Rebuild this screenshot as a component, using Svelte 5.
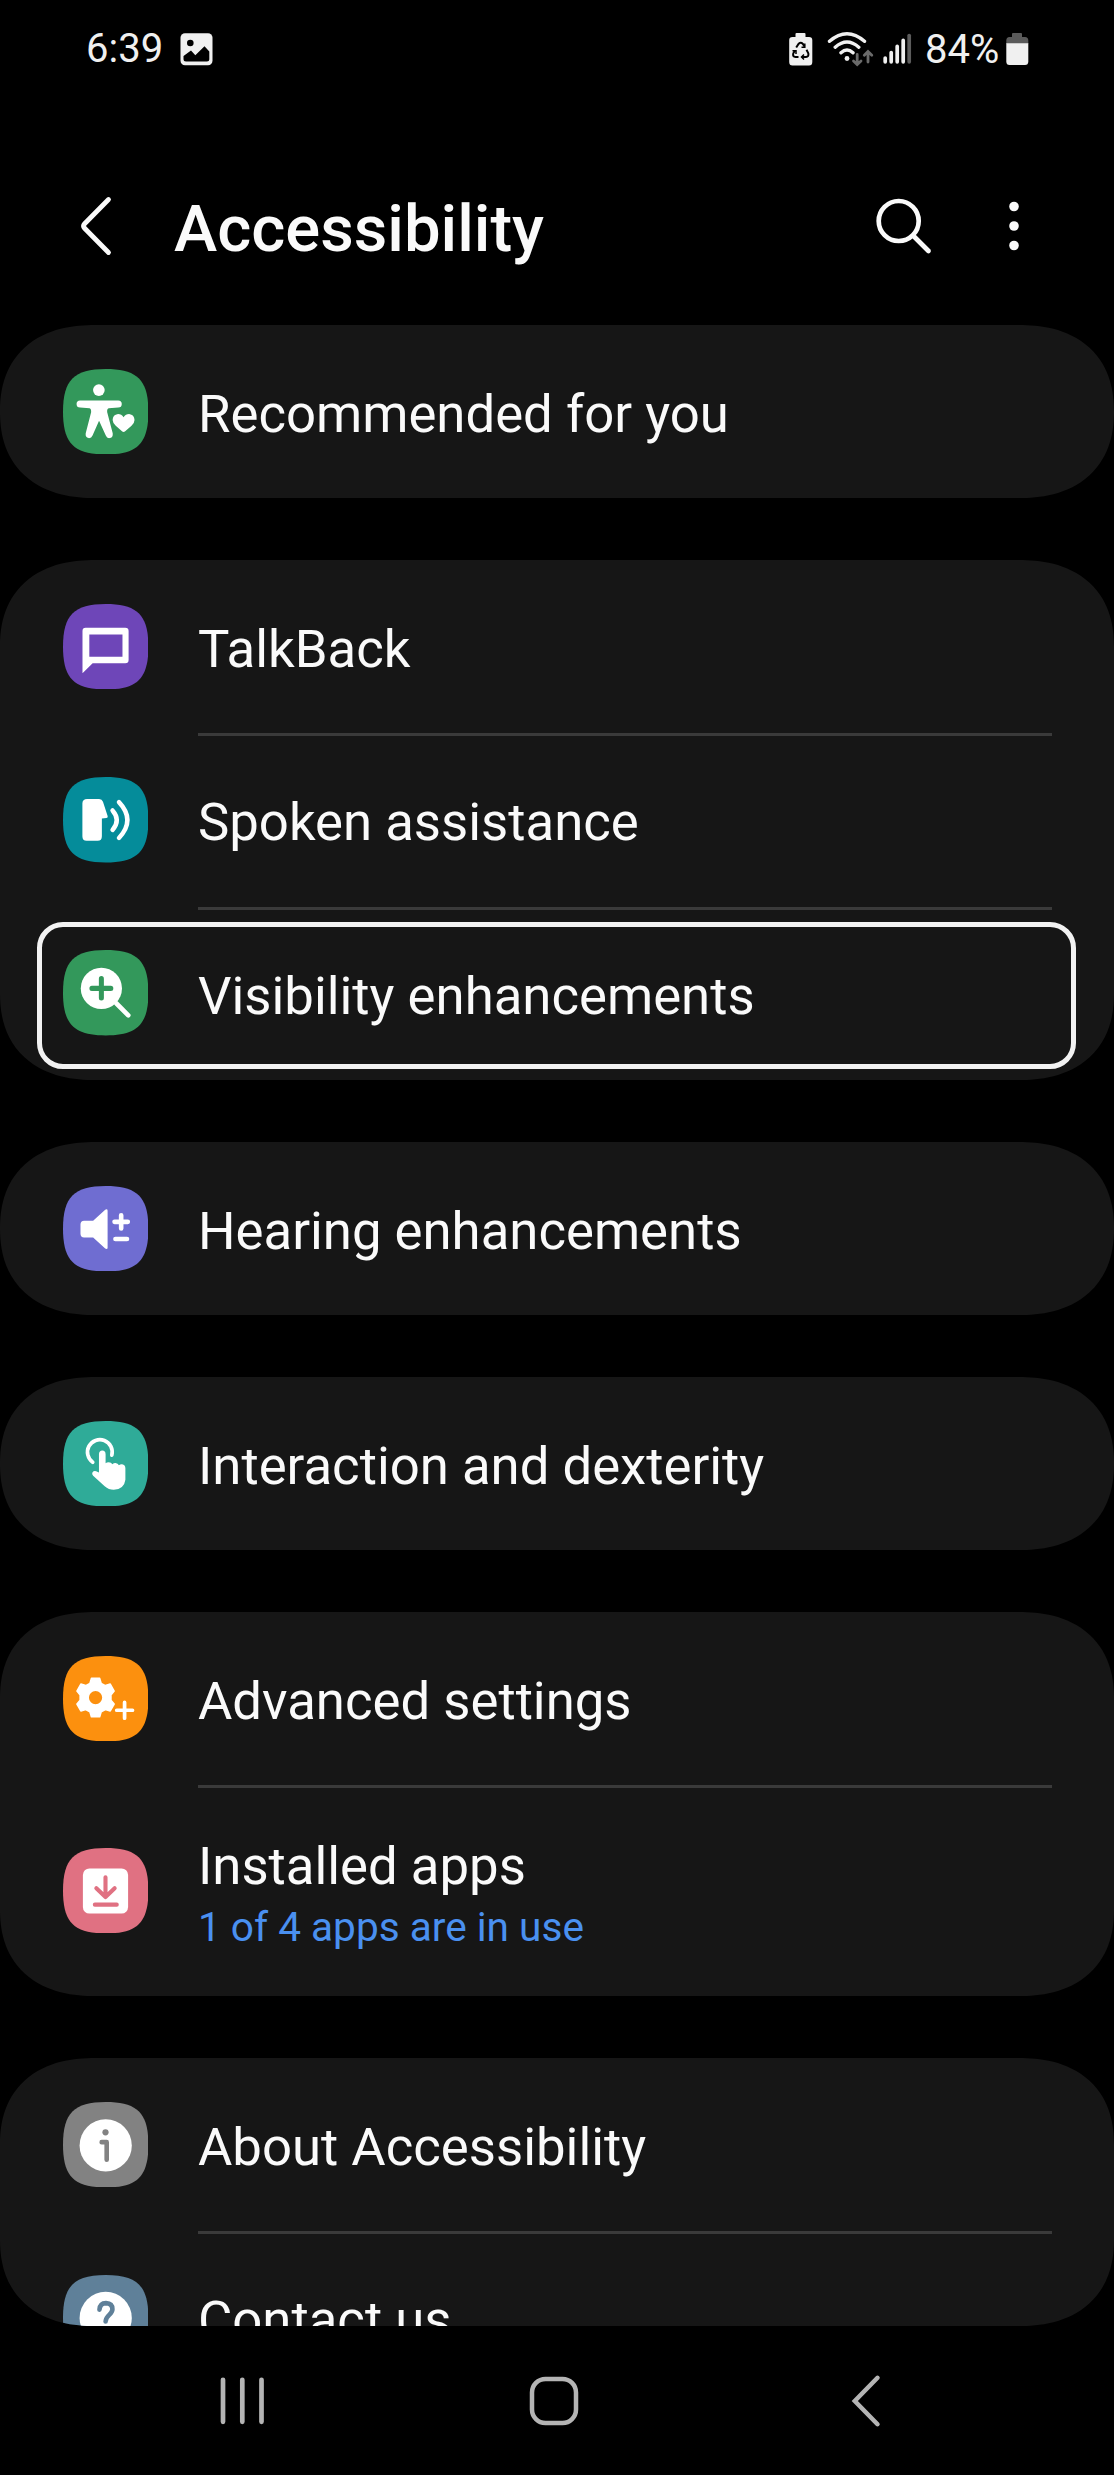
<script>
  const groups = [
    [{ icon: 'recommended', color: '#33985b', label: 'Recommended for you' }],
    [
      { icon: 'talkback', color: '#6e46b8', label: 'TalkBack' },
      { icon: 'spoken', color: '#058c9a', label: 'Spoken assistance' },
      { icon: 'visibility', color: '#33985b', label: 'Visibility enhancements', focused: true }
    ],
    [{ icon: 'hearing', color: '#6f6dd1', label: 'Hearing enhancements' }],
    [{ icon: 'touch', color: '#2fab98', label: 'Interaction and dexterity' }],
    [
      { icon: 'advanced', color: '#fc900e', label: 'Advanced settings' },
      { icon: 'apps', color: '#e07182', label: 'Installed apps', sub: '1 of 4 apps are in use' }
    ],
    [
      { icon: 'about', color: '#828282', label: 'About Accessibility' },
      { icon: 'contact', color: '#5f8099', label: 'Contact us' }
    ]
  ];
</script>

{#snippet glyph(name, color)}
  {#if name === 'recommended'}
    <circle cx="35.7" cy="21" r="5.8" />
    <path d="M17 31.3H55a3.5 3.5 0 0 1 0 7L45.5 39Q43.6 39.5 44 43L49.5 64Q50 68.5 46.3 68.8 43.6 69 42.6 66.2L35.9 51.5 29.4 66.2Q28.3 69 25.5 68.8 22 68.2 22.6 64L28 43Q28.2 39.5 26.5 39L17 38.3a3.5 3.5 0 0 1 0-7Z" />
    <path d="M60.3 48Q58.2 44.7 54.8 44.7 49.5 45.4 49.4 50.7 49.6 54 52.5 56.5L59 62.3Q60.3 63.2 61.6 62.3L68.2 56.5Q71.1 54 71.2 50.7 71 45.4 65.8 44.7 62.4 44.7 60.3 48Z" />
  {:else if name === 'talkback'}
    <path fill-rule="evenodd" d="M22.5 23.7H62Q65.3 23.7 65.3 27V55.7Q65.3 59 62 59H29.5L19.4 69V27Q19.4 23.7 22.5 23.7ZM26.2 30.3V52.6H59.2V30.3Z" />
  {:else if name === 'spoken'}
    <path d="M24 22H36Q38.8 22 39.8 24.6L44.5 39Q44.8 40.6 43.2 40.7L38.7 41.2V59Q38.7 63.5 34.5 63.5H23.5Q19.3 63.5 19.3 59V26.5Q19.3 22 24 22Z" />
    <path class="line" stroke-width="4.4" d="M49.3 33.3Q57.8 43 49.3 52.7M55.7 25Q72.5 42.8 55.7 60.7" />
  {:else if name === 'visibility'}
    <circle cx="38.2" cy="38.2" r="20.5" />
    <path class="line" stroke-width="4.6" d="M53 53L65 65" />
    <path class="line" stroke={color} stroke-width="5" d="M28.8 38.2H47.6M38.2 28.5V47.8" />
  {:else if name === 'hearing'}
    <path d="M21 34.5H30L42 23.6Q44.3 22.3 44.4 24.6V61.5Q44.3 63.6 42 62.3L30 51.3H21Q17.4 51 17.4 47.5V38.3Q17.4 34.8 21 34.5Z" />
    <path class="line" stroke-width="4.6" d="M51.3 35.7H64.5M57.9 29.1V42.3M52.2 52.7H63.7" />
  {:else if name === 'touch'}
    <path class="line" stroke-width="3.7" d="M29.6 41A12.3 12.3 0 1 1 48.6 34" />
    <path d="M35.8 33Q36 29.3 39.1 29.3 42.3 29.3 42.4 33V42Q43.5 41 45.5 41 48 41 49.2 43 50.5 41.7 52.3 41.8 54.6 42 55.7 44 57 42.8 58.8 43 62.1 43.4 62.1 47V58.5Q61 67.8 50.5 68.5 45.5 68.5 41.500 65L30 54.5Q28.3 52.7 29.4 50.9 30.6 49.3 33 49.9L35.8 51.2Z" />
  {:else if name === 'advanced'}
    <path fill-rule="evenodd" d="M28.3 22.3H36.5L38 27.3 42.2 29.5 47 28 50.9 34.9 47.7 38.7V44L50.9 47.8 47 54.700 42.200 53.200 38 55.500 36.500 60.500H28.300L26.800 55.500 22.600 53.200 17.800 54.700 13.900 47.800 17.100 44V38.700L13.900 34.900 17.800 28 22.600 29.500 26.800 27.300ZM32.400 34A7.400 7.400 0 1 0 32.400 48.800 7.400 7.400 0 1 0 32.400 34Z" stroke="#fff" stroke-width="1.6" stroke-linejoin="round" />
    <path class="line" stroke-width="3.7" d="M53.5 54H69.2M61.3 46.2V61.9" />
  {:else if name === 'apps'}
    <rect x="19.8" y="20.3" width="45" height="45" rx="6.5" />
    <path class="line" stroke={color} stroke-width="4.1" d="M42.3 29.2V48.5M33.2 40L42.3 48.8 51.4 40M31.7 56.4H53.5" />
  {:else if name === 'about'}
    <circle cx="42.5" cy="43.2" r="26" />
    <circle cx="42.3" cy="30.2" r="3.1" fill={color} />
    <path class="line" stroke={color} stroke-width="4.6" d="M38.5 40H43.5V57.5" />
  {:else}
    <circle cx="42.5" cy="42.7" r="26" />
    <path class="line" stroke={color} stroke-width="4.6" d="M36.3 34.5Q36.8 28 42.8 28 49.2 28.2 49.2 34.2C49.2 39.5 42.4 40 42.4 46.3" />
    <circle cx="42.4" cy="55" r="3" fill={color} />
  {/if}
{/snippet}

<div class="screen">
  <div class="status">
    <span class="time">6:39</span>
    <svg class="photo" width="33" height="33" viewBox="0 0 33 33">
      <rect x=".5" y=".3" width="32" height="32" rx="4.5" fill="#f0f0f0" />
      <circle cx="10.3" cy="10" r="3.3" />
      <path d="M3.5 26V23L11 17.5 15.3 22.2 24.5 13.2 29.3 18.5V26.5Q29.3 28.5 27 28.5H6Q3.5 28.5 3.5 26Z" />
    </svg>
    <div class="indicators">
      <svg width="24" height="33" viewBox="0 0 24 33">
        <path fill="#f0f0f0" d="M7.5 0H15.5Q16.5 0 16.5 1V4H20Q23.3 4 23.3 7.3V29Q23.3 32.5 20 32.5H3.5Q.2 32.5 .2 29V7.3Q.2 4 3.5 4H6.5V1Q6.5 0 7.5 0Z" />
        <g fill="none" stroke="#000" stroke-width="2">
          <path d="M7.2 14.5L9.7 10.7Q11.7 8.8 13.7 10.7L15.5 13.5M17.5 16.8L19.3 20.3Q20 24 17 24H13M9.5 24H6.5Q3.3 24 4.3 20.3L6 17.5" />
          <path d="M15.8 10.5V14.2H12.5M15 21.5L12.5 24 15 26.5M3.5 17.8H7V21" stroke-width="1.5" />
        </g>
      </svg>
      <svg class="wifi" width="48" height="37" viewBox="0 0 48 37" fill="none" stroke-linecap="round">
        <g stroke="#f0f0f0" stroke-width="3.4">
          <path d="M2.5 10.3Q20 -4.8 37.5 10.3M8.2 16.2Q20 6 31.8 16.2M14 21.8Q20 16.2 26 21.8" />
        </g>
        <circle cx="20" cy="27.5" r="2.4" fill="#f0f0f0" />
        <path stroke="#6a6a6a" stroke-width="2.8" d="M30.2 23.5V33M26.5 30L30.2 33.5 34 30M41 31V20.8M37.3 24.2L41 20.4 44.8 24.2" />
      </svg>
      <svg class="signal" width="29" height="33" viewBox="0 0 29 33" fill="none" stroke="#f0f0f0" stroke-width="3.7" stroke-linecap="round">
        <path d="M2.2 25V28.8M8.2 19.6V28.8M14.2 13.4V28.8M20.2 7.4V28.8" />
        <path stroke="#5c5c5c" d="M26.2 2.5V28.8" />
      </svg>
      <span class="percent">84%</span>
      <svg class="battery" width="23" height="33" viewBox="0 0 23 33">
        <path fill="#5a5a5a" d="M7 0H15Q16 0 16 1V4H19Q22.3 4 22.3 7.5V11H.3V7.5Q.3 4 3.5 4H6V1Q6 0 7 0Z" />
        <path fill="#f0f0f0" d="M.3 10.3H22.3V28.5Q22.3 32 19 32H3.5Q.3 32 .3 28.5Z" />
      </svg>
    </div>
  </div>

  <header>
    <svg class="back" width="34" height="62" viewBox="0 0 34 62" fill="none" stroke="#fafafa" stroke-width="4.8" stroke-linecap="round">
      <path d="M29.5 4.5L5.6 28.7Q3.5 31 5.6 33.3L29.5 57.5" />
    </svg>
    <h1>Accessibility</h1>
    <svg class="search" width="58" height="58" viewBox="0 0 58 58" fill="none" stroke="#fafafa" stroke-width="4.7" stroke-linecap="round">
      <circle cx="24.7" cy="24" r="20" />
      <path d="M39.5 39L54.5 54" />
    </svg>
    <svg class="more" width="12" height="50" viewBox="0 0 12 50" fill="#fafafa">
      <circle cx="6" cy="5.5" r="4.8" /><circle cx="6" cy="25" r="4.8" /><circle cx="6" cy="44.5" r="4.8" />
    </svg>
  </header>

  <main>
    {#each groups as group, i}
      <section class:cut={i === groups.length - 1}>
        {#each group as item}
          <div class="row" class:tall={item.sub} class:focused={item.focused}>
            <svg class="tile" viewBox="0 0 85 85" fill="#fff">
              <path fill={item.color} d="M42.5 0C74 0 85 11 85 42.5S74 85 42.5 85 0 74 0 42.5 11 0 42.5 0Z" />
              {@render glyph(item.icon, item.color)}
            </svg>
            <div class="text">
              <span class="label">{item.label}</span>
              {#if item.sub}<span class="sub">{item.sub}</span>{/if}
            </div>
          </div>
        {/each}
      </section>
    {/each}
  </main>

  <nav>
    <svg width="46" height="50" viewBox="0 0 46 50" stroke="#b4b4b4" stroke-width="4.7" stroke-linecap="round">
      <path d="M4 3.8V45.8M23.3 3.8V45.8M42.5 3.8V45.8" />
    </svg>
    <svg class="home" width="50" height="50" viewBox="0 0 50 50" fill="none" stroke="#b4b4b4" stroke-width="4.5">
      <rect x="3" y="3" width="44" height="44" rx="13.5" />
    </svg>
    <svg width="32" height="54" viewBox="0 0 32 54" fill="none" stroke="#b4b4b4" stroke-width="4.5" stroke-linecap="round">
      <path d="M27.5 3.8L4.8 27 27.5 50.2" />
    </svg>
  </nav>
</div>

<style>
  :global(body) {
    background: #000;
  }
  .screen {
    width: 1114px;
    height: 2475px;
    overflow: hidden;
    display: flex;
    flex-direction: column;
    background: #000;
    color: #fafafa;
    font-family: Roboto, "Liberation Sans", sans-serif;
  }
  svg {
    display: block;
    flex: none;
  }
  .status {
    height: 98px;
    flex: none;
    display: flex;
    align-items: center;
    padding: 0 85px 0 86px;
    box-sizing: border-box;
    font-size: 40px;
    line-height: 48px;
    color: #f0f0f0;
  }
  .time {
    width: 94px;
  }
  .indicators {
    margin-left: auto;
    display: flex;
    align-items: center;
  }
  .wifi {
    margin-left: 14px;
  }
  .signal {
    margin-left: 8px;
  }
  .percent {
    margin-left: 13px;
    width: 81px;
    padding-top: 1px;
  }
  header {
    height: 227px;
    flex: none;
    box-sizing: border-box;
    display: flex;
    align-items: center;
    padding: 30px 94px 2px 79px;
  }
  h1 {
    margin: 7px 0 0;
    flex: 1;
    padding-left: 61px;
    font-size: 65.2px;
    line-height: 76px;
    font-weight: 500;
    white-space: nowrap;
  }
  .more {
    margin-left: 76px;
  }
  main {
    display: flex;
    flex-direction: column;
    gap: 62px;
    height: 2001.5px;
    flex: none;
  }
  section {
    flex: none;
    background: #161616;
    border-radius: 95px / 86.5px;
    corner-shape: superellipse(1.2);
    overflow: hidden;
  }
  .cut {
    height: 268px;
  }
  .row {
    position: relative;
    height: 173.2px;
    display: flex;
    align-items: center;
    padding-left: 62.6px;
    padding-right: 62px;
  }
  .tall {
    height: 210.8px;
  }
  .tile {
    width: 85.4px;
    height: 85.4px;
    margin-right: 50px;
  }
  .text {
    flex: 1;
    height: 100%;
    box-sizing: border-box;
    display: flex;
    flex-direction: column;
    justify-content: center;
    padding-top: 5px;
  }
  .row + .row .text {
    background: linear-gradient(#3a3a3a, #3a3a3a) top / 100% 3px no-repeat;
  }
  .label {
    font-size: 52.7px;
    line-height: 62px;
    white-space: nowrap;
  }
  .tall .text {
    padding-top: 8px;
  }
  .sub {
    font-size: 40.6px;
    line-height: 54px;
    padding-top: 3px;
    color: #4a90f0;
    white-space: nowrap;
  }
  .focused::after {
    content: "";
    position: absolute;
    inset: 15.4px 38px 10.8px 37px;
    border: 5px solid #f2f2f2;
    border-radius: 26px;
  }
  nav {
    flex: 1;
    display: flex;
    align-items: center;
    justify-content: space-between;
    padding: 0 232px 0 219px;
  }
  .home {
    margin-right: 8px;
  }
  .line {
    fill: none;
    stroke-linecap: round;
    stroke-linejoin: round;
  }
  .line:not([stroke]) {
    stroke: #fff;
  }
</style>
